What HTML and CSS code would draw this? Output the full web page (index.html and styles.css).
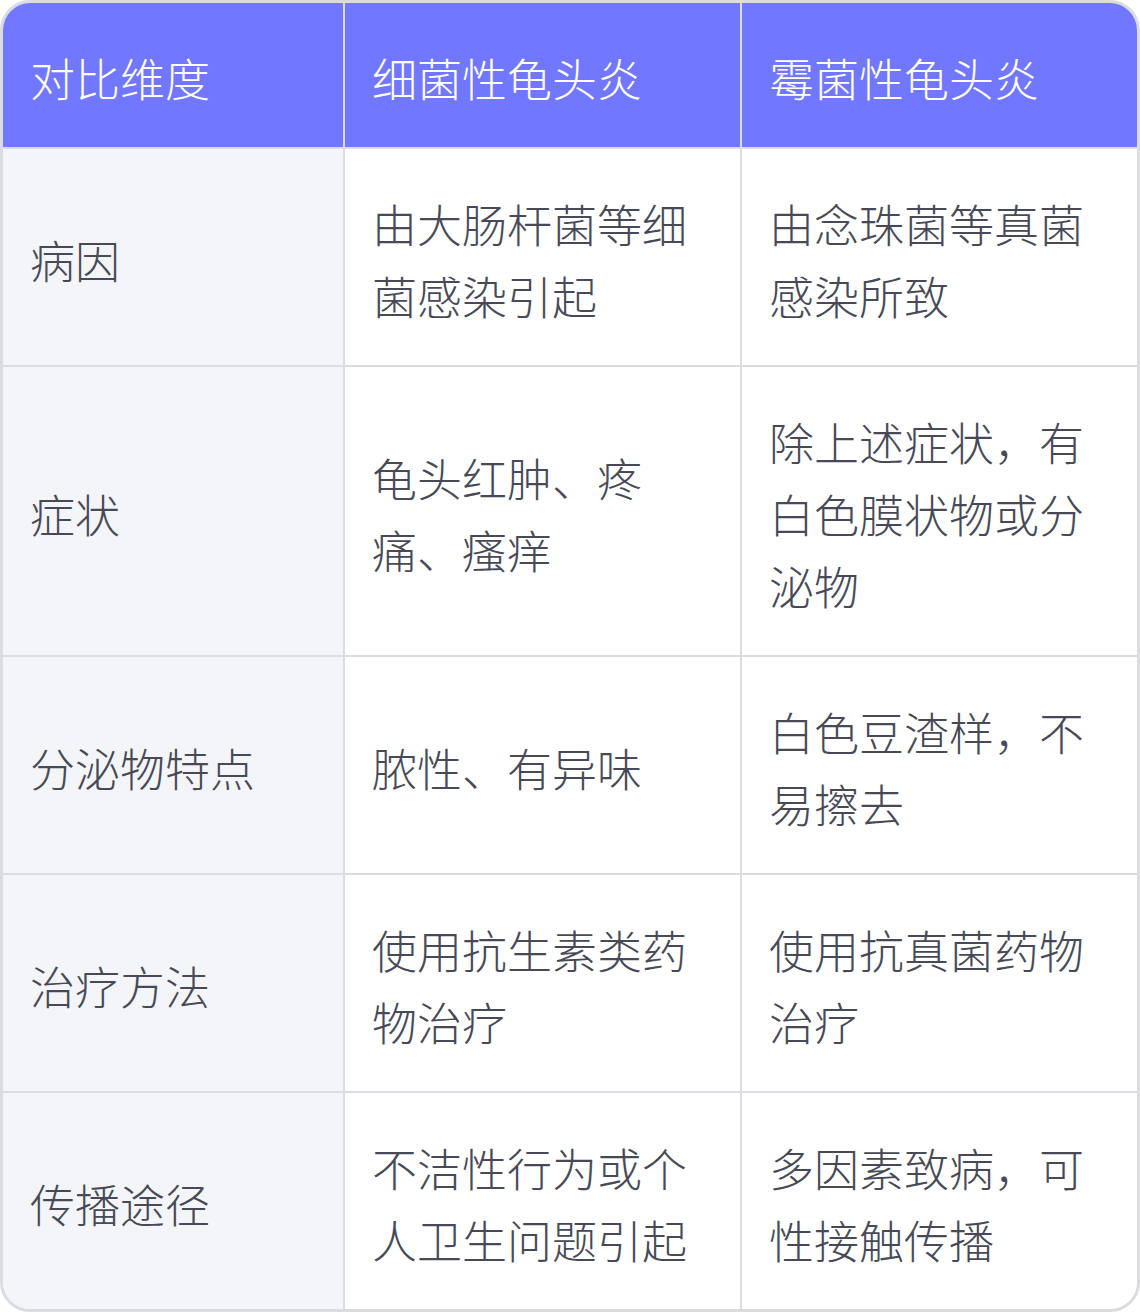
FILE: index.html
```html
<!DOCTYPE html>
<html lang="zh-CN">
<head>
<meta charset="utf-8">
<link rel="stylesheet" href="styles.css">
</head>
<body>
<div class="wrap">
<table class="cmp">
  <colgroup>
    <col class="c1"><col class="c2"><col class="c3">
  </colgroup>
  <thead>
    <tr><th>对比维度</th><th>细菌性龟头炎</th><th>霉菌性龟头炎</th></tr>
  </thead>
  <tbody>
    <tr><td>病因</td><td>由大肠杆菌等细菌感染引起</td><td>由念珠菌等真菌感染所致</td></tr>
    <tr><td>症状</td><td>龟头红肿、疼痛、瘙痒</td><td>除上述症状，有白色膜状物或分泌物</td></tr>
    <tr><td>分泌物特点</td><td>脓性、有异味</td><td>白色豆渣样，不易擦去</td></tr>
    <tr><td>治疗方法</td><td>使用抗生素类药物治疗</td><td>使用抗真菌药物治疗</td></tr>
    <tr><td>传播途径</td><td>不洁性行为或个人卫生问题引起</td><td>多因素致病，可性接触传播</td></tr>
  </tbody>
</table>
</div>
</body>
</html>
```
FILE: styles.css
```css
html, body { margin: 0; padding: 0; background: #ffffff; }
.wrap { width: 1140px; }
.cmp {
  width: 1140px;
  border-collapse: separate;
  border-spacing: 0;
  border: 3px solid #dcdce0;
  border-radius: 30px;
  overflow: hidden;
  table-layout: fixed;
  font-family: "Noto Sans CJK SC", "Noto Sans", sans-serif;
  font-weight: 300;
  font-size: 45px;
  line-height: 72px;
  color: #474a56;
}
.c1 { width: 342px; }
.c2 { width: 397px; }
.c3 { width: 395px; }
.cmp th, .cmp td {
  padding: 39px 26px 33px 27px;
  text-align: left;
  vertical-align: middle;
  border-right: 2px solid #dcdde2;
  border-bottom: 2px solid #dcdde2;
  word-break: break-all;
}
.cmp th:last-child, .cmp td:last-child { border-right: none; }
.cmp tbody tr:last-child td { border-bottom: none; }
.cmp th {
  background: #7177ff;
  color: #ffffff;
  font-weight: 300;
}
.cmp td:first-child { background: #f4f5f9; }
.cmp td { background: #ffffff; }
```
